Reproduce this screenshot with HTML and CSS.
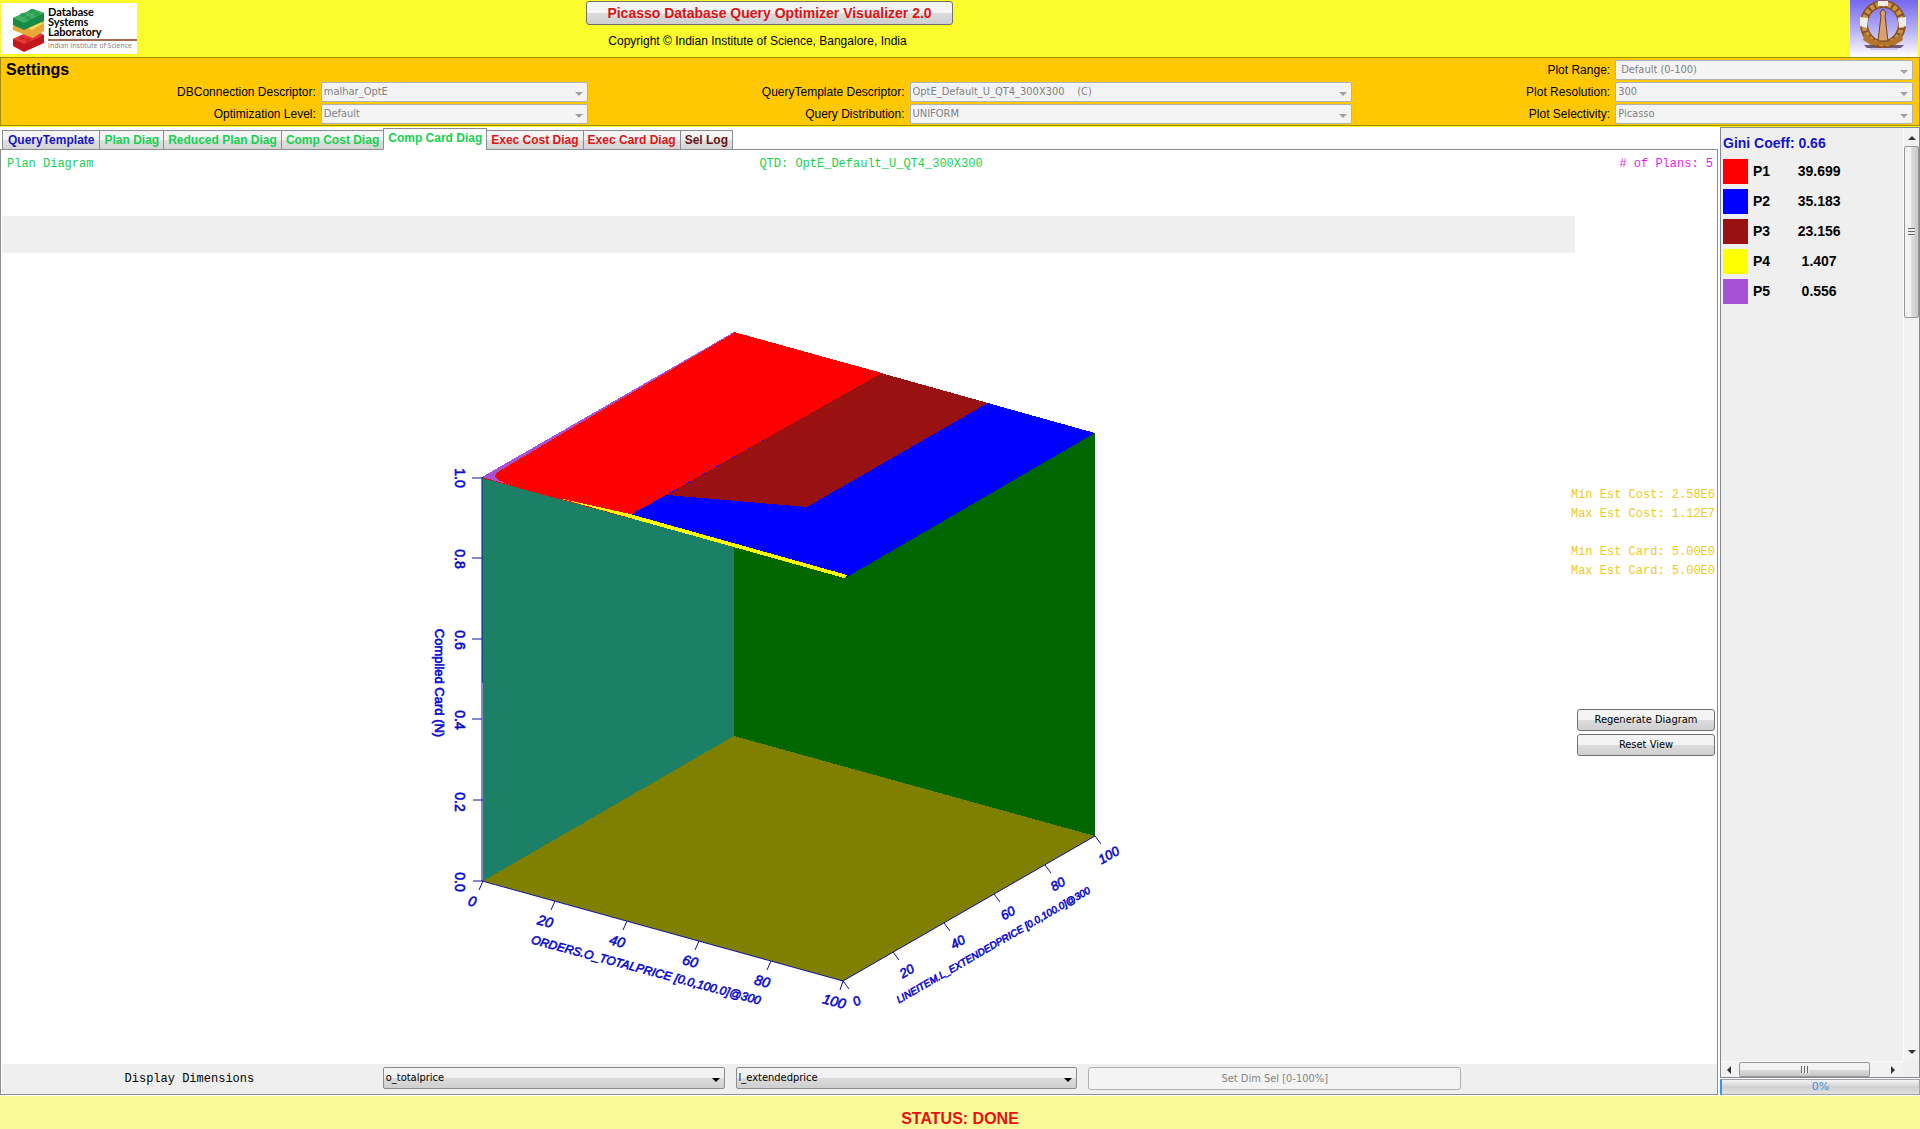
FILE: index.html
```html
<!DOCTYPE html>
<html lang="en">
<head>
<meta charset="utf-8">
<title>Picasso Database Query Optimizer Visualizer 2.0</title>
<link rel="stylesheet" href="styles.css">
</head>
<body>
<header class="banner">
  <div class="lab-logo">
    <svg class="lab-bricks" viewBox="0 0 36 46" aria-hidden="true">
      <path d="M2 33l20-9 11 5v8l-20 9-11-6z" fill="#c4161c"/>
      <path d="M2 33l20-9 11 5-20 9z" fill="#e23a35"/>
      <path d="M2 20l9-4 22-1v10l-11 7-20-8z" fill="#e8a838"/>
      <path d="M12 20l12-6 9 3-12 7z" fill="#f6d85a"/>
      <path d="M2 12l20-9 11 4v8l-20 9-11-5z" fill="#178a45"/>
      <path d="M2 12l20-9 11 4-20 10z" fill="#3fae62"/>
      <g fill="#2d9c54"><ellipse cx="12" cy="9" rx="3" ry="2"/><ellipse cx="21" cy="5" rx="3" ry="2"/><ellipse cx="17" cy="12" rx="3" ry="2"/><ellipse cx="26" cy="8" rx="3" ry="2"/></g>
      <g fill="#d22a28"><ellipse cx="11" cy="32" rx="3" ry="2"/><ellipse cx="17" cy="34" rx="3" ry="2"/></g>
    </svg>
    <div class="lab-text">
      <div class="lab-name">Database<br>Systems<br>Laboratory</div>
      <div class="lab-inst">Indian Institute of Science</div>
    </div>
  </div>
  <div class="banner-title">
    <button class="btn title-btn" type="button">Picasso Database Query Optimizer Visualizer 2.0</button>
    <p class="copyright">Copyright © Indian Institute of Science, Bangalore, India</p>
  </div>
  <svg class="emblem" viewBox="0 0 68 57" role="img" aria-label="Indian Institute of Science emblem">
    <defs>
      <linearGradient id="sky" x1="0" y1="0" x2="0" y2="1">
        <stop offset="0" stop-color="#7468f0"/><stop offset=".55" stop-color="#bab4f6"/><stop offset="1" stop-color="#fff"/>
      </linearGradient>
    </defs>
    <rect width="68" height="57" fill="url(#sky)"/>
    <path d="M14 45h40l-3 3H17z" fill="#6b5a78"/>
    <path d="M20 49h28" stroke="#a9a0e8" stroke-width="1"/>
    <ellipse cx="33" cy="24" rx="19" ry="20" fill="none" stroke="#8a5020" stroke-width="8"/>
    <ellipse cx="33" cy="24" rx="19" ry="20" fill="none" stroke="#c99446" stroke-width="5" stroke-dasharray="4 2"/>
    <path d="M15 32q4 8 14 9h8q10-1 14-9l2 8-8 5H21l-8-5z" fill="#b5742c"/>
    <path d="M33 9l3 4-1 3 3 25h-10l3-25-1-3z" fill="#d9a070" stroke="#70401c" stroke-width="1"/>
    <path d="M28 1h10v5H28zM10 17l8 1-1 10-7-2zM48 18l8-1v9l-7 2z" fill="#f0eee8"/>
  </svg>
</header>

<section class="settings" aria-label="Settings">
  <h2 class="settings-title">Settings</h2>
  <label class="c5" for="range">Plot Range:</label>
  <span class="combo c6 off"><select id="range" class="inset" disabled><option>Default (0-100)</option></select></span>
  <label class="c1" for="conn">DBConnection Descriptor:</label>
  <span class="combo c2 off"><select id="conn" disabled><option>malhar_OptE</option></select></span>
  <label class="c3" for="qtd">QueryTemplate Descriptor:</label>
  <span class="combo c4 off"><select id="qtd" disabled><option>OptE_Default_U_QT4_300X300 &nbsp;&nbsp; (C)</option></select></span>
  <label class="c5" for="res">Plot Resolution:</label>
  <span class="combo c6 off"><select id="res" disabled><option>300</option></select></span>
  <label class="c1" for="opt">Optimization Level:</label>
  <span class="combo c2 off"><select id="opt" disabled><option>Default</option></select></span>
  <label class="c3" for="dist">Query Distribution:</label>
  <span class="combo c4 off"><select id="dist" disabled><option>UNIFORM</option></select></span>
  <label class="c5" for="sel">Plot Selectivity:</label>
  <span class="combo c6 off"><select id="sel" disabled><option>Picasso</option></select></span>
</section>

<div class="workspace">
  <main class="main">
    <div class="tabs" role="tablist">
      <button class="tab blue" role="tab" type="button">QueryTemplate</button>
      <button class="tab green" role="tab" type="button">Plan Diag</button>
      <button class="tab green" role="tab" type="button">Reduced Plan Diag</button>
      <button class="tab green" role="tab" type="button">Comp Cost Diag</button>
      <button class="tab green active" role="tab" type="button" aria-selected="true">Comp Card Diag</button>
      <button class="tab red" role="tab" type="button">Exec Cost Diag</button>
      <button class="tab red" role="tab" type="button">Exec Card Diag</button>
      <button class="tab dark" role="tab" type="button">Sel Log</button>
    </div>
    <div class="panel">
      <div class="info">
        <span class="info-name">Plan Diagram</span>
        <span class="info-qtd">QTD: OptE_Default_U_QT4_300X300</span>
        <span class="info-plans"># of Plans: 5</span>
      </div>
      <div class="view">
        <div class="plot">
          <div class="strip"></div>
          <svg class="cube" viewBox="2 253 1573 811" role="img" aria-label="Compiled cardinality diagram">
            <g shape-rendering="crispEdges">
              <path fill="#1c8066" d="M482 477L734 332V736L483 881z"/>
              <path fill="#060" d="M734 332L1095 433V836L734 736z"/>
              <path fill="olive" d="M483 881L734 736L1095 836L843 981z"/>
              <path fill="#00f" d="M734 332L1095 433L847 577L482 477z"/>
              <path fill="#911" d="M881 373L988 403L807 507L667 495z"/>
              <path fill="#f00" d="M734 332L882 373L666 495L632 514V519L482 478z"/>
              <path fill="#a652d7" d="M482 477L734 332L734 333L570 429L523 457L496 473L495 477L498 480L510 485z"/>
              <path fill="#ff0" d="M558 498L630 514L847 575L844 578L780 560L630 518z"/>
            </g>
            <g class="axis">
              <path d="M482 477V881L843 981L1095 836"/>
              <path d="M472 478h10M472 558h10M472 639h10M472 719h10M473 800h10M473 881h10"/>
              <path d="M483 881l-4 9M555 901l-4 9M627 921l-4 9M699 941l-4 9M771 961l-4 9M843 981l-3 9"/>
              <path d="M843 981l6 8M893 952l6 8M944 923l6 8M994 894l6 8M1045 865l6 8M1095 836l6 8"/>
            </g>
            <g class="ticks">
              <text transform="translate(455 478) rotate(90)">1.0</text>
              <text transform="translate(455 559) rotate(90)">0.8</text>
              <text transform="translate(455 640) rotate(90)">0.6</text>
              <text transform="translate(455 720) rotate(90)">0.4</text>
              <text transform="translate(455 802) rotate(90)">0.2</text>
              <text transform="translate(455 882) rotate(90)">0.0</text>
              <text class="name" transform="translate(435 683) rotate(90)">Compiled Card (N)</text>
            </g>
            <g class="ticks slant">
              <text transform="translate(471 906) rotate(15)">0</text>
              <text transform="translate(544 926) rotate(15)">20</text>
              <text transform="translate(616 946) rotate(15)">40</text>
              <text transform="translate(689 966) rotate(15)">60</text>
              <text transform="translate(761 986) rotate(15)">80</text>
              <text transform="translate(833 1006) rotate(15)">100</text>
              <text class="name" transform="translate(645 974) rotate(15)">ORDERS.O_TOTALPRICE [0.0,100.0]@300</text>
            </g>
            <g class="ticks small">
              <text transform="translate(859 1005) rotate(-30)">0</text>
              <text transform="translate(909 975) rotate(-30)">20</text>
              <text transform="translate(960 946) rotate(-30)">40</text>
              <text transform="translate(1010 917) rotate(-30)">60</text>
              <text transform="translate(1060 888) rotate(-30)">80</text>
              <text transform="translate(1111 859) rotate(-30)">100</text>
              <text class="name" transform="translate(995 948) rotate(-30)">LINEITEM.L_EXTENDEDPRICE [0.0,100.0]@300</text>
            </g>
          </svg>
        </div>
        <aside class="stats">
          <div class="stat-text">
            <p>Min Est Cost: 2.58E6</p>
            <p>Max Est Cost: 1.12E7</p>
            <p class="stat-break">Min Est Card: 5.00E0</p>
            <p>Max Est Card: 5.00E0</p>
          </div>
          <button class="btn" type="button">Regenerate Diagram</button>
          <button class="btn" type="button">Reset View</button>
        </aside>
      </div>
      <div class="dims">
        <label class="dims-label" for="dim1">Display Dimensions</label>
        <span class="combo on"><select id="dim1"><option>o_totalprice</option></select></span>
        <span class="combo on"><select id="dim2" aria-label="Second dimension"><option>l_extendedprice</option></select></span>
        <button class="btn dims-btn" type="button" disabled>Set Dim Sel [0-100%]</button>
      </div>
    </div>
  </main>

  <aside class="side">
    <div class="legend-box">
      <div class="legend">
        <h3 class="gini">Gini Coeff: 0.66</h3>
        <table class="plans">
          <tr><td><span class="swatch p1"></span></td><td>P1</td><td class="share">39.699</td></tr>
          <tr><td><span class="swatch p2"></span></td><td>P2</td><td class="share">35.183</td></tr>
          <tr><td><span class="swatch p3"></span></td><td>P3</td><td class="share">23.156</td></tr>
          <tr><td><span class="swatch p4"></span></td><td>P4</td><td class="share">1.407</td></tr>
          <tr><td><span class="swatch p5"></span></td><td>P5</td><td class="share">0.556</td></tr>
        </table>
      </div>
      <div class="vbar">
        <i class="arrow up"></i>
        <div class="vthumb"><i class="grip"></i></div>
        <i class="arrow down"></i>
      </div>
      <div class="hbar">
        <i class="arrow left"></i>
        <div class="hthumb"><i class="grip"></i></div>
        <i class="arrow right"></i>
      </div>
    </div>
    <div class="progress" role="progressbar" aria-label="Progress" aria-valuenow="0">0%</div>
  </aside>
</div>

<footer class="status">STATUS: DONE</footer>
</body>
</html>
```
FILE: styles.css
```css
* { box-sizing: border-box; }

body {
  margin: 0;
  height: 100vh;
  min-height: 720px;
  display: flex;
  flex-direction: column;
  background: #fff;
  color: #000;
  font-family: "Liberation Sans", Arial, sans-serif;
  font-size: 12px;
}

h2, h3, p { margin: 0; }

/* Banner */
.banner {
  display: grid;
  grid-template-columns: 137px minmax(0, 1fr) 70px;
  height: 57px;
  flex: none;
  background: #fcfc2c;
}
.lab-logo {
  display: flex;
  gap: 1px;
  align-self: center;
  height: 51px;
  margin-left: 1px;
  padding-left: 10px;
  background: #fff;
}
.lab-bricks { flex: none; width: 36px; height: 46px; margin-top: 3px; }
.lab-text { min-width: 0; flex: 1; padding-top: 4px; }
.lab-name {
  font: bold 11px/10px Lato, sans-serif;
  padding-bottom: 2px;
  border-bottom: 2px solid #a86a50;
}
.lab-inst {
  color: #8a7878;
  font: 7px/10px "Open Sans", sans-serif;
  white-space: nowrap;
}
.banner-title {
  display: flex;
  flex-direction: column;
  align-items: center;
  padding-top: 1px;
  padding-right: 448px;
}
.copyright {
  line-height: 16px;
  padding-top: 8px;
  padding-right: 24px;
}
.emblem { width: 68px; height: 57px; }

/* Buttons */
.btn {
  height: 22px;
  padding: 0;
  border: 1px solid #707070;
  border-radius: 3px;
  background: linear-gradient(#f4f4f4 0 50%, #dcdcdc 50%, #cfcfcf);
  color: #000;
  font: 11px/16px "DejaVu Sans Condensed", "DejaVu Sans", sans-serif;
}
.btn:disabled { border-color: #adb2b5; background: #f4f4f4; color: #838383; }
.title-btn {
  height: 24px;
  width: 367px;
  color: #dc1414;
  font: bold 14px/20px "Liberation Sans", Arial, sans-serif;
}

/* Settings */
.settings {
  display: grid;
  grid-template-columns: 315fr 267fr 312fr 443fr 253fr 298fr;
  grid-template-rows: repeat(3, 20px);
  gap: 2px 5px;
  flex: none;
  padding: 2px 6px 1px 0;
  border: 1px solid #a08c00;
  background: #ffc800;
  box-shadow: 0 1px #fcfc2c;
  margin-bottom: 1px;
}
.settings-title {
  grid-column: 1;
  padding-left: 5px;
  font-size: 16px;
  line-height: 20px;
}
.settings label {
  font-size: 12px;
  line-height: 20px;
  text-align: right;
  white-space: nowrap;
}
.c1 { grid-column: 1; }
.c2 { grid-column: 2; }
.c3 { grid-column: 3; }
.c4 { grid-column: 4; }
.c5 { grid-column: 5; }
.c6 { grid-column: 6; }

/* Drop-downs */
.combo { position: relative; display: block; min-width: 0; }
.combo select {
  display: block;
  appearance: none;
  width: 100%;
  height: 20px;
  margin: 0;
  padding: 0 16px 0 2px;
  border: 1px solid #adb2b5;
  border-radius: 2px;
  background: #f4f4f4;
  font: 11px/16px "DejaVu Sans Condensed", "DejaVu Sans", sans-serif;
}
.combo select.inset { padding-left: 5px; }
.combo::after {
  content: "";
  position: absolute;
  right: 5px;
  top: 50%;
  border: 4px solid transparent;
  border-top-color: #a0a0a0;
  border-bottom: 0;
  pointer-events: none;
}
.off select { color: #808080; opacity: 1; }
.on select {
  height: 22px;
  border-color: #8c8c8c;
  background: linear-gradient(#f2f2f2 0 50%, #dcdcdc 50%, #cfcfcf);
  color: #000;
}
.on::after { border-top-color: #000; }

/* Workspace */
.workspace {
  display: grid;
  grid-template-columns: minmax(0, 1fr) 200px;
  gap: 2px;
  flex: 1;
  min-height: 0;
}
.main { display: flex; flex-direction: column; min-height: 0; padding-top: 1px; }
.tabs {
  display: flex;
  align-items: flex-end;
  height: 22px;
  margin-bottom: -1px;
  padding-left: 3px;
  position: relative;
}
.tab {
  height: 20px;
  margin: 0 0 0 -1px;
  padding: 0 4px;
  border: 1px solid #8c8e94;
  background: linear-gradient(#f4f4f4 0 50%, #e0e0e0 50%, #d4d4d4);
  font: bold 12px/18px "Liberation Sans", Arial, sans-serif;
  white-space: nowrap;
}
.tab.active {
  height: 22px;
  padding: 0 4px 2px;
  border-bottom-color: #fff;
  background: #fff;
}
.blue { color: #1414c8; padding: 0 5px; }
.green { color: #14d250; }
.red { color: #e01414; }
.dark { color: #641414; }

.panel {
  display: flex;
  flex-direction: column;
  flex: 1;
  min-height: 0;
  border: 1px solid #8c8e94;
  padding-left: 1px;
  margin-bottom: 1px;
}
.info {
  display: grid;
  grid-template-columns: 1fr auto 1fr;
  padding: 6px 4px 0 5px;
  height: 66px;
  flex: none;
  font: 12px/16px "Liberation Mono", monospace;
}
.info-name, .info-qtd { color: #14d250; }
.info-qtd { padding-left: 22px; }
.info-plans { color: #e61ee6; text-align: right; }
.view {
  display: grid;
  grid-template-columns: minmax(0, 1fr) 142px;
  grid-template-rows: minmax(0, 1fr);
  flex: 1;
  min-height: 0;
}
.plot { display: flex; flex-direction: column; min-height: 0; }
.strip { height: 37px; flex: none; background: #efefef; }
.cube { flex: 1; min-height: 0; width: 100%; }

.axis { fill: none; stroke: #1010a0; stroke-width: 1; }
.ticks {
  fill: #0a0acd;
  stroke: #0a0acd;
  stroke-width: .6;
  font-family: "Liberation Sans", Arial, sans-serif;
  font-size: 14px;
  text-anchor: middle;
}
.slant, .small { font-style: italic; }
.small { font-size: 13px; }
.ticks .name { font-size: 13px; }
.slant .name { font-size: 12px; }
.small .name { font-size: 10px; }

.stats {
  display: flex;
  flex-direction: column;
  gap: 3px;
  justify-content: center;
  padding: 0 2px 39px;
}
.stat-text {
  margin-bottom: 125px;
  color: #f0c81e;
  font: 12px/19px "Liberation Mono", monospace;
  display: flex;
  flex-direction: column;
  align-items: flex-end;
  white-space: nowrap;
}
.stat-break { padding-top: 19px; }

.dims {
  display: grid;
  grid-template-columns: 370fr 342fr 342fr 373fr 245fr;
  gap: 11px;
  align-items: start;
  flex: none;
  height: 30px;
  padding-top: 3px;
  background: #efefef;
}
.dims-label {
  padding-left: 5px;
  font: 12px/25px "Liberation Mono", monospace;
  text-align: center;
}
.dims-btn { height: 23px; }

/* Legend */
.side { display: flex; flex-direction: column; min-height: 0; }
.legend-box {
  display: grid;
  grid-template-columns: minmax(0, 1fr) 16px;
  grid-template-rows: minmax(0, 1fr) 16px;
  flex: 1;
  min-height: 0;
  border: 1px solid #828790;
  background: #efefef;
}
.legend { padding: 7px 0 0 2px; overflow: hidden; }
.gini { color: #1414c8; font-size: 14px; line-height: 16px; padding-bottom: 5px; }
.plans { border-collapse: collapse; font-size: 14px; font-weight: bold; line-height: 16px; }
.plans td { height: 30px; padding: 0 5px 0 0; }
.plans .share { width: 98px; text-align: center; padding: 0 10px 0 0; }
.swatch { display: block; width: 25px; height: 25px; }
.p1 { background: #f00; }
.p2 { background: #00f; }
.p3 { background: #991111; }
.p4 { background: #ff0; }
.p5 { background: #a652d7; }

.vbar {
  display: flex;
  flex-direction: column;
  align-items: center;
  background: #f2f2f2;
  border-left: 1px solid #fafafa;
}
.vthumb, .hthumb {
  display: grid;
  place-items: center;
  border: 1px solid #979797;
  border-radius: 2px;
}
.vthumb {
  width: 100%;
  height: 172px;
  margin-top: 6px;
  background: linear-gradient(90deg, #f2f2f2 0 50%, #dcdcdc 50%, #c8c8c8);
}
.hthumb {
  width: 131px;
  margin-left: 8px;
  background: linear-gradient(#f2f2f2 0 50%, #dcdcdc 50%, #c8c8c8);
}
.vthumb .grip { width: 7px; height: 8px; background: repeating-linear-gradient(#666 0 1px, #eee 1px 3px); }
.hthumb .grip { width: 8px; height: 7px; background: repeating-linear-gradient(90deg, #666 0 1px, #eee 1px 3px); }
.hbar { display: flex; align-items: stretch; background: #f2f2f2; border-top: 1px solid #fafafa; }
.arrow { border: 4px solid transparent; width: 0; height: 0; }
.up { margin-top: 8px; border-top: 0; border-bottom-color: #333; }
.down { margin: auto 0 7px; border-bottom: 0; border-top-color: #333; }
.left { margin-left: 6px; align-self: center; border-left: 0; border-right-color: #333; }
.right { margin: 0 8px 0 auto; align-self: center; border-right: 0; border-left-color: #333; }

.progress {
  flex: none;
  height: 16px;
  margin: 1px 0;
  border: 1px solid #a0a0a8;
  border-left: 2px solid #3296f0;
  background: linear-gradient(#f4f4f4, #d0d0d0 50%, #e0e0e0);
  color: #3c8cdc;
  font: 11px/13px "DejaVu Sans", sans-serif;
  text-align: center;
}

/* Status */
.status {
  flex: none;
  height: 33px;
  padding-top: 6px;
  background: #fafa9b;
  color: #eb0f0f;
  font-size: 16px;
  font-weight: bold;
  line-height: 34px;
  overflow: hidden;
  text-align: center;
}
```
